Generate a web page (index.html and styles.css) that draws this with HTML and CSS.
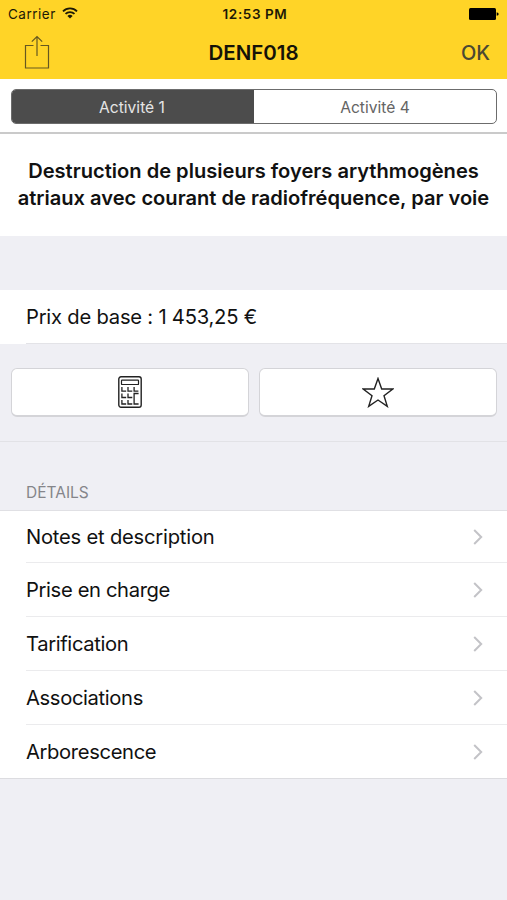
FILE: index.html
```html
<!DOCTYPE html>
<html lang="fr">
<head>
<meta charset="utf-8">
<meta name="viewport" content="width=device-width">
<title>DENF018</title>
<link rel="stylesheet" href="styles.css">
</head>
<body>
<header class="top">
  <div class="status">
    <div class="carrier"><span class="carrier-name">Carrier</span>
      <svg class="wifi" viewBox="0 0 16 12" width="16" height="12"><path d="M1 4.300a10 10 0 0 1 14 0M3.500 6.900a6.400 6.400 0 0 1 9 0" fill="none" stroke="#1d1906" stroke-width="1.800"/><path d="M8 11.600 5.400 9a3.700 3.700 0 0 1 5.200 0z" fill="#1d1906"/></svg>
    </div>
    <time class="clock">12:53 PM</time>
    <svg class="battery" viewBox="0 0 30 12" width="30" height="12"><rect width="27" height="12" rx="1.500"/><path d="M27.700 4.200q2 .4 2 1.800t-2 1.800z"/></svg>
  </div>
  <nav class="navbar">
    <svg class="share" viewBox="0 0 26 35" width="26" height="35"><path d="M9.500 10.500H1.500V33h23V10.500h-8M13 21V1.500M7.800 6.700 13 1.500l5.200 5.200" fill="none" stroke="#665820" stroke-width="1.200"/></svg>
    <h1 class="title">DENF018</h1>
    <span class="ok">OK</span>
  </nav>
</header>
<div class="tabs">
  <div class="segmented">
    <div class="segment active"><span>Activité 1</span></div>
    <div class="segment"><span>Activité 4</span></div>
  </div>
</div>
<h2 class="headline"><span>Destruction de plusieurs foyers arythmogènes</span><span>atriaux avec courant de radiofréquence, par voie</span></h2>
<div class="price"><span>Prix de base : 1 453,25 €</span></div>
<div class="actions">
  <div class="button">
    <svg viewBox="0 0 24 32" width="24" height="32" fill="none" stroke="#222"><rect x=".8" y=".8" width="22.400" height="30.400" rx="2.200" stroke-width="1.400"/><rect x="3.500" y="4.200" width="17" height="4.300" rx=".6" stroke-width="1.200"/><path d="M3.900 11v4.200h4.300M10 11v4.200h4.300M16.100 11v4.200h4.300M3.900 17.500v4h4.300M10 17.500v4h4.300M3.900 24v4h4.300M10 24v4h4.300M20.600 17.500h-4.500V28h4.500" stroke-width="1.300"/></svg>
  </div>
  <div class="button">
    <svg viewBox="0 0 32 31" width="32" height="31"><path d="M16 1.500 19.700 12H30.800L22 18.700 25.300 29.400 16 23 6.700 29.400 10 18.700 1.200 12H12.300z" fill="none" stroke="#222" stroke-width="1.400"/></svg>
  </div>
</div>
<section class="details">
  <h3 class="section-title"><span>DÉTAILS</span></h3>
  <ul class="list">
    <li class="row"><span>Notes et description</span><svg class="chevron" viewBox="0 0 10 16" width="10" height="16"><path d="m1.200 1 7 7-7 7"/></svg></li>
    <li class="row tight"><span>Prise en charge</span><svg class="chevron" viewBox="0 0 10 16" width="10" height="16"><path d="m1.200 1 7 7-7 7"/></svg></li>
    <li class="row tight"><span>Tarification</span><svg class="chevron" viewBox="0 0 10 16" width="10" height="16"><path d="m1.200 1 7 7-7 7"/></svg></li>
    <li class="row tight"><span>Associations</span><svg class="chevron" viewBox="0 0 10 16" width="10" height="16"><path d="m1.200 1 7 7-7 7"/></svg></li>
    <li class="row tight"><span>Arborescence</span><svg class="chevron" viewBox="0 0 10 16" width="10" height="16"><path d="m1.200 1 7 7-7 7"/></svg></li>
  </ul>
</section>
</body>
</html>
```
FILE: styles.css
```css
* { box-sizing: border-box; margin: 0; padding: 0; }
body { background: #efeff4; color: #111; font-family: Inter, "Liberation Sans", sans-serif; min-height: 900px; overflow: hidden; }
svg { display: block; flex: none; }
span, time { white-space: nowrap; }
.top { height: 79px; background: #ffd427; }
.status { height: 27px; padding: 0 8px; display: grid; grid-template-columns: 1fr auto 1fr; align-items: center; font-size: 13.5px; color: #1d1906; }
.carrier { display: flex; align-items: center; gap: 6px; letter-spacing: .5px; }
.wifi { margin-top: -2px; }
.clock { padding-left: 3px; font-size: 13.5px; font-weight: 600; letter-spacing: .6px; }
.battery { justify-self: end; fill: #000; }
.navbar { height: 51px; padding: 0 17px 0 24px; display: grid; grid-template-columns: 1fr auto 1fr; align-items: center; }
.title { margin-right: 7px; font-size: 20.5px; font-weight: 600; line-height: 24px; color: #151208; }
.ok { justify-self: end; font-size: 20px; font-weight: 500; color: #4b4933; }
.tabs { height: 55px; background: #fff; padding: 10px 10px 0 11px; border-bottom: 2px solid #cacaca; }
.segmented { height: 35px; border: 1px solid #6c6c6c; border-radius: 5px; display: grid; grid-template-columns: 242px 1fr; overflow: hidden; }
.segment { padding-top: 1px; display: flex; align-items: center; justify-content: center; font-size: 15.6px; color: #646464; }
.active { padding-right: 2px; background: #4c4c4c; color: #e5e5e5; }
.headline { height: 102px; padding-top: 24px; background: #fff; display: flex; flex-direction: column; align-items: center; font-size: 20.1px; line-height: 27px; font-weight: 600; }
.price { margin-top: 54px; height: 54px; background: linear-gradient(#e3e3e7, #e3e3e7) 26px 100% / 100% 1px no-repeat, #fff; padding-left: 26px; line-height: 54px; font-size: 20.2px; letter-spacing: -.22px; }
.actions { height: 98px; padding: 24px 10px 0 11px; display: flex; gap: 10px; border-bottom: 1px solid #e2e2e6; }
.button { flex: 1; height: 49px; background: #fff; border: 1px solid #d4d4d8; border-bottom-width: 2px; border-radius: 6px; display: flex; align-items: center; justify-content: center; }
.section-title { height: 68px; padding: 41px 0 0 26px; font-size: 15.5px; line-height: 19px; font-weight: 400; color: #85858a; }
.list { list-style: none; background: #fff; border-top: 1px solid #e0e0e4; border-bottom: 1px solid #dcdce0; }
.row { height: 54px; margin-left: 26px; padding-right: 24px; display: flex; align-items: center; justify-content: space-between; font-size: 20.2px; letter-spacing: -.22px; border-bottom: 1px solid #ebebed; }
.tight { letter-spacing: -.36px; }
.row:first-child { height: 52px; }
.row:last-child { height: 53px; border-bottom: 0; }
.chevron path { fill: none; stroke: #c3c3c7; stroke-width: 2; }
```
